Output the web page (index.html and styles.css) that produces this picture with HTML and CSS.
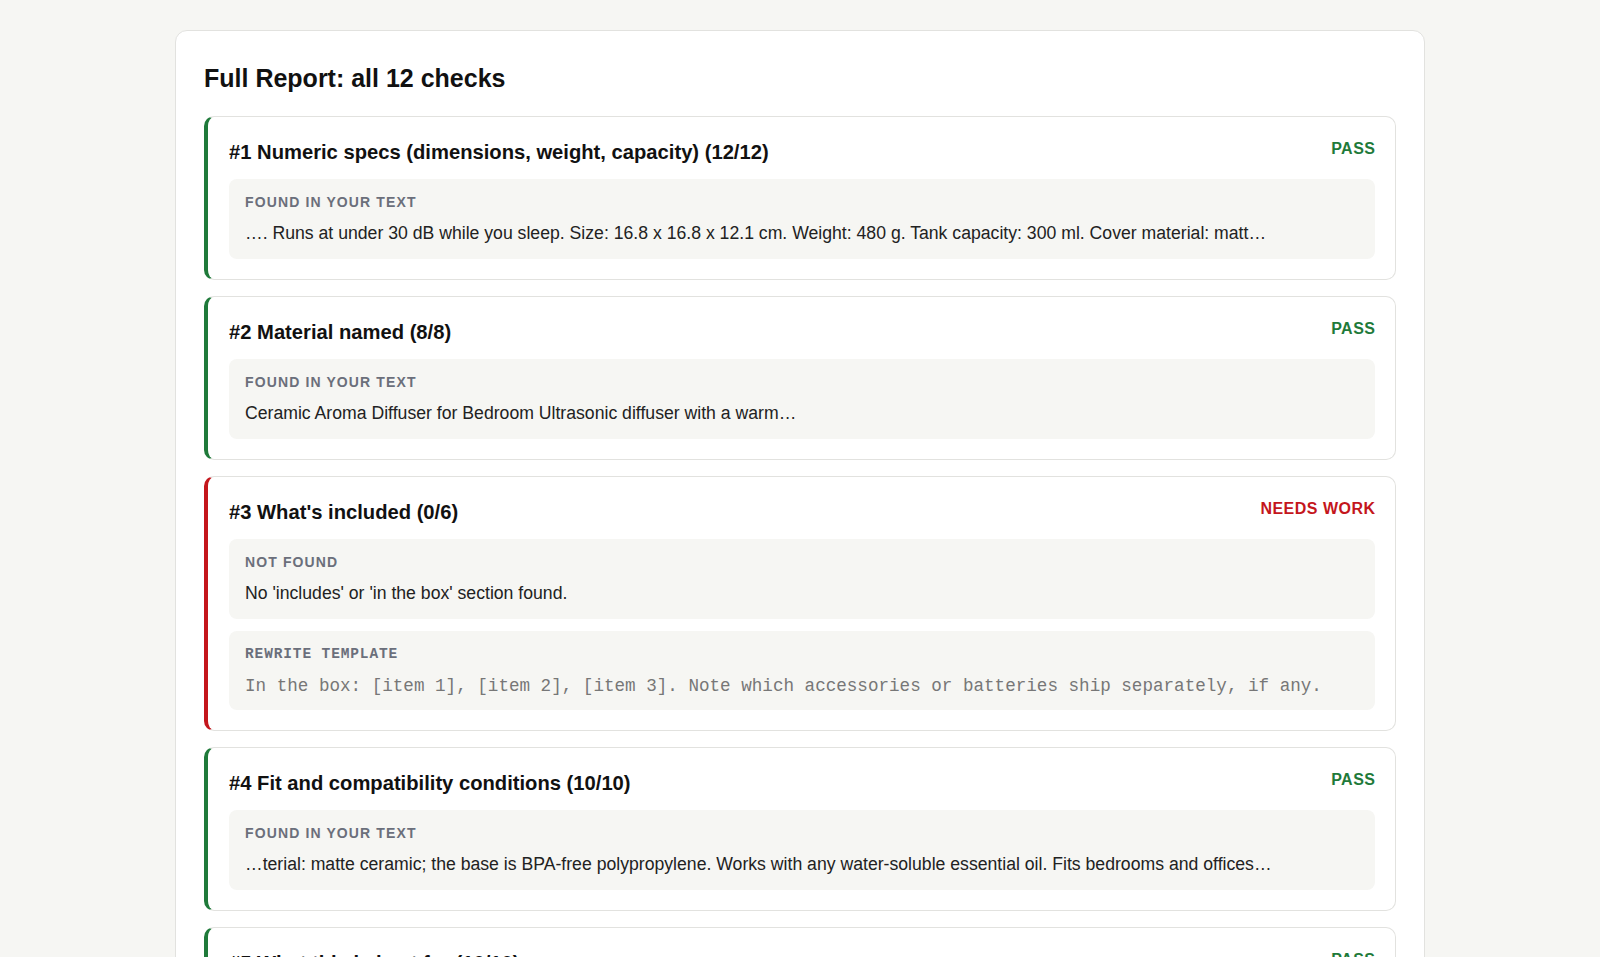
FILE: index.html
```html
<!DOCTYPE html>
<html lang="en">
<head>
    <meta charset="UTF-8">
    <meta name="viewport" content="width=device-width, initial-scale=1.0">
    <title>Full Report</title>
    <link rel="stylesheet" href="styles.css">
</head>
<body>
    <div class="report">
        <h2 class="report-title">Full Report: all 12 checks</h2>

        <!-- Check 1 -->
        <div class="check pass">
            <div class="check-head">
                <h3 class="check-name">#1 Numeric specs (dimensions, weight, capacity) (12/12)</h3>
                <span class="status">PASS</span>
            </div>
            <div class="evidence">
                <div class="evidence-label">Found in your text</div>
                <div class="evidence-text">…. Runs at under 30 dB while you sleep. Size: 16.8 x 16.8 x 12.1 cm. Weight: 480 g. Tank capacity: 300 ml. Cover material: matt…</div>
            </div>
        </div>

        <!-- Check 2 -->
        <div class="check pass">
            <div class="check-head">
                <h3 class="check-name">#2 Material named (8/8)</h3>
                <span class="status">PASS</span>
            </div>
            <div class="evidence">
                <div class="evidence-label">Found in your text</div>
                <div class="evidence-text">Ceramic Aroma Diffuser for Bedroom Ultrasonic diffuser with a warm…</div>
            </div>
        </div>

        <!-- Check 3 -->
        <div class="check fail">
            <div class="check-head">
                <h3 class="check-name">#3 What's included (0/6)</h3>
                <span class="status">NEEDS WORK</span>
            </div>
            <div class="evidence">
                <div class="evidence-label">Not found</div>
                <div class="evidence-text">No 'includes' or 'in the box' section found.</div>
            </div>
            <div class="evidence template">
                <div class="evidence-label">Rewrite template</div>
                <div class="template-text">In the box: [item 1], [item 2], [item 3]. Note which accessories or batteries ship separately, if any.</div>
            </div>
        </div>

        <!-- Check 4 -->
        <div class="check pass">
            <div class="check-head">
                <h3 class="check-name">#4 Fit and compatibility conditions (10/10)</h3>
                <span class="status">PASS</span>
            </div>
            <div class="evidence">
                <div class="evidence-label">Found in your text</div>
                <div class="evidence-text">…terial: matte ceramic; the base is BPA-free polypropylene. Works with any water-soluble essential oil. Fits bedrooms and offices…</div>
            </div>
        </div>

        <!-- Check 5 -->
        <div class="check pass">
            <div class="check-head">
                <h3 class="check-name">#5 What this is best for (10/10)</h3>
                <span class="status">PASS</span>
            </div>
            <div class="evidence">
                <div class="evidence-label">Found in your text</div>
                <div class="evidence-text">…Best for bedrooms, nurseries and small offices up to 25 m²…</div>
            </div>
        </div>
    </div>
</body>
</html>
```

FILE: styles.css
```css
* {
    box-sizing: border-box;
    font-family: 'Liberation Sans', Arial, Helvetica, sans-serif;
}
body {
    margin: 0;
    padding: 30px 0 0;
    background-color: #f6f6f3;
    color: #1a1a1a;
}

/* Внешняя карточка отчёта */
.report {
    max-width: 1250px;
    margin: 0 auto;
    padding: 30px 28px 28px;
    background-color: white;
    border: 1px solid #e2e2df;
    border-radius: 12px;
}
.report-title {
    margin: 0 0 20px 0;
    font-size: 25px;
    line-height: 35px;
    font-weight: bold;
    color: #111;
}

/* Карточка проверки */
.check {
    margin-bottom: 16px;
    padding: 20px 20px 20px 21px;
    background-color: white;
    border: 1px solid #e2e2df;
    border-left: 4px solid #1f7a3a;
    border-radius: 10px;
}
.check.fail {
    border-left-color: #c4161c;
}
.check-head {
    display: flex;
    justify-content: space-between;
    align-items: flex-start;
    margin-bottom: 11px;
}
.check-name {
    margin: 0;
    font-size: 20.2px;
    line-height: 31px;
    font-weight: bold;
    color: #111;
}
.status {
    font-size: 16px;
    line-height: 23px;
    font-weight: bold;
    letter-spacing: 0.03em;
    margin-right: -0.03em;
    color: #1f7a3a;
}
.fail .status {
    color: #c4161c;
}

/* Блок с найденным текстом */
.evidence {
    padding: 14px 16px 14.5px;
    background-color: #f6f6f3;
    border-radius: 8px;
}
.evidence + .evidence {
    margin-top: 12px;
}
.evidence-label {
    font-size: 14px;
    line-height: 19.5px;
    font-weight: bold;
    text-transform: uppercase;
    letter-spacing: 0.08em;
    color: #6b6f7b;
}
.evidence-text {
    margin-top: 8px;
    font-size: 17.65px;
    line-height: 24px;
    color: #222;
}

/* Шаблон для переписывания */
.evidence.template {
    padding: 15px 16px 12px;
}
.template .evidence-label {
    font-family: 'Liberation Mono', 'Courier New', monospace;
    font-size: 14.5px;
    line-height: 16px;
    letter-spacing: 0.06em;
}
.template-text {
    margin-top: 12px;
    font-family: 'Liberation Mono', 'Courier New', monospace;
    font-size: 17.6px;
    line-height: 24px;
    color: #777;
}
```
